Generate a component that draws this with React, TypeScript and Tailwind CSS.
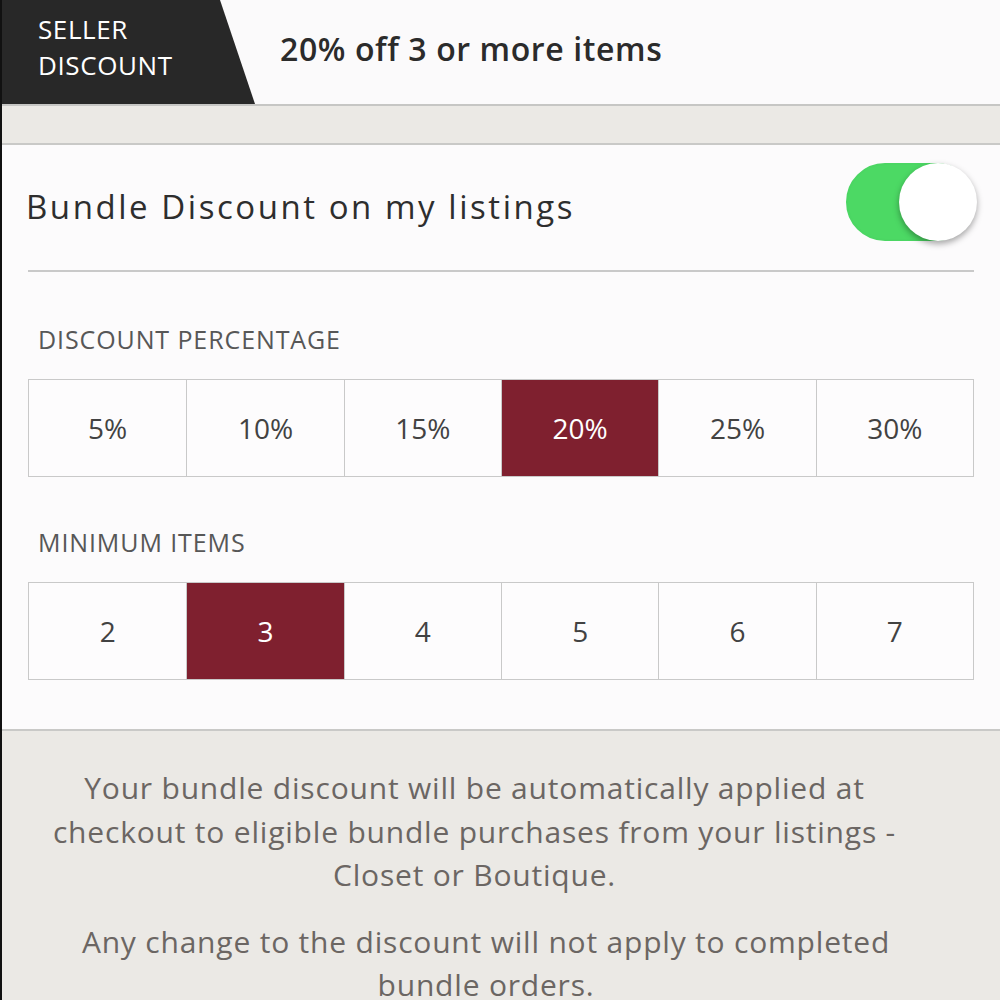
import { useState } from 'react'

const PERCENTS = ['5%', '10%', '15%', '20%', '25%', '30%']
const ITEMS = ['2', '3', '4', '5', '6', '7']

function Segmented({
  options,
  value,
  onChange,
}: {
  options: string[]
  value: string
  onChange: (v: string) => void
}) {
  return (
    <div className="mx-[26px] grid grid-cols-6 border border-[#c9c9c9] bg-white">
      {options.map((o, i) => {
        const active = o === value
        return (
          <button
            key={o}
            onClick={() => onChange(o)}
            className={
              'flex h-[96px] items-center justify-center text-[28px] ' +
              (i > 0 ? 'border-l border-[#c9c9c9] ' : '') +
              (active ? 'bg-[#7f202f] text-white' : 'bg-[#fdfcfd] text-[#424242]')
            }
          >
            {o}
          </button>
        )
      })}
    </div>
  )
}

export default function App() {
  const [enabled, setEnabled] = useState(true)
  const [percent, setPercent] = useState('20%')
  const [items, setItems] = useState('3')

  return (
    <div className="h-[1000px] w-[1000px] overflow-hidden border-l-2 border-[#111] bg-[#ebe9e5] font-['Open_Sans',sans-serif]">
      {/* header */}
      <div className="flex h-[106px] items-center border-b-2 border-[#c6c6c4] bg-[#fbfafb]">
        <div className="flex h-full w-[253px] shrink-0 flex-col justify-center bg-[#282828] pl-[36px] pb-[10px] text-[26px] leading-[36px] tracking-[0.6px] text-white [clip-path:polygon(0_0,218px_0,253px_100%,0_100%)]">
          <span>SELLER</span>
          <span>DISCOUNT</span>
        </div>
        <span className="ml-[25px] pb-[6px] text-[32px] font-semibold tracking-[0.6px] text-[#2b2b2b]">20% off 3 or more items</span>
      </div>

      {/* strip */}
      <div className="h-[39px] border-b-2 border-[#c9c9c7]" />

      {/* panel */}
      <div className="border-b-2 border-[#c9c9c7] bg-[#fcfbfc] pb-[49px]">
        <div className="mx-[26px] flex h-[127px] items-center justify-between border-b-2 border-[#c9c9c9] pb-[2px]">
          <span className="-ml-[2px] text-[33px] tracking-[2.55px] text-[#2e2e2e]">Bundle Discount on my listings</span>
          <button
            onClick={() => setEnabled(!enabled)}
            className={
              'relative -mr-[1px] mt-[-10px] h-[78px] w-[129px] rounded-full border-2 transition-colors ' +
              (enabled ? 'border-[#4bd663] bg-[#4cd964]' : 'border-[#e2e2e2] bg-[#f4f4f4]')
            }
          >
            <span
              className={
                'absolute top-[-2px] h-[78px] w-[78px] rounded-full bg-white shadow-[0_3px_6px_rgba(0,0,0,0.35)] transition-all ' +
                (enabled ? 'left-[51px]' : 'left-[-2px]')
              }
            />
          </button>
        </div>

        <div className="px-[36px] pt-[52px] pb-[25px] text-[25px] leading-[30px] tracking-[0.9px] text-[#575757]">DISCOUNT PERCENTAGE</div>
        <Segmented options={PERCENTS} value={percent} onChange={setPercent} />

        <div className="px-[36px] pt-[50px] pb-[25px] text-[25px] leading-[30px] tracking-[0.9px] text-[#575757]">MINIMUM ITEMS</div>
        <Segmented options={ITEMS} value={items} onChange={setItems} />
      </div>

      {/* footer notes */}
      <div className="pt-[35px] text-center text-[30px] leading-[43.5px] tracking-[0.8px] text-[#6b6663]">
        <p className="ml-[35px] mr-[88px]">
          Your bundle discount will be automatically applied at checkout to eligible bundle purchases from your listings - Closet or Boutique.
        </p>
        <p className="mt-[23px] ml-[54px] mr-[84px]">
          Any change to the discount will not apply to completed bundle orders.
        </p>
      </div>
    </div>
  )
}
